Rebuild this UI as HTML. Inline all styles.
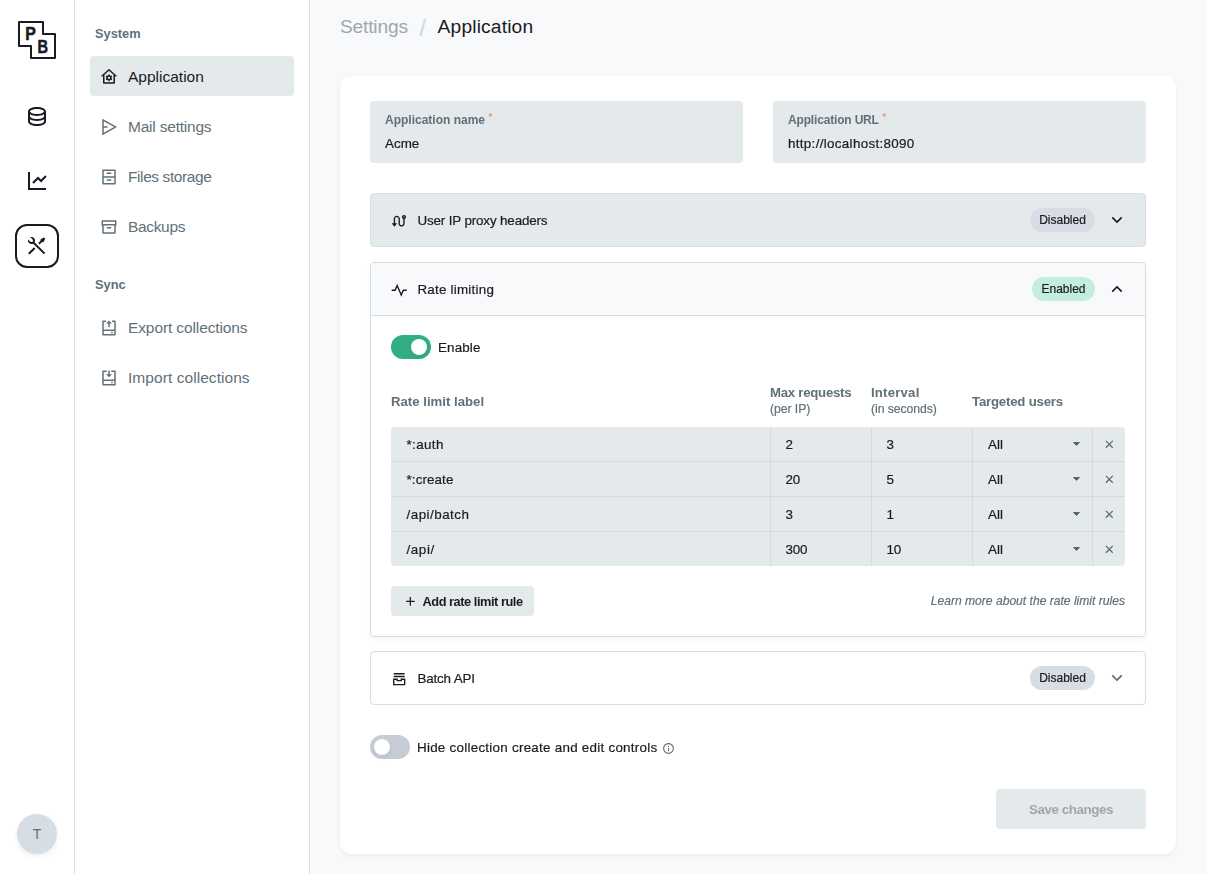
<!DOCTYPE html>
<html lang="en">
<head>
<meta charset="utf-8">
<title>Application settings - PocketBase</title>
<style>
*{box-sizing:border-box;margin:0;padding:0}
html,body{width:1206px;height:874px;overflow:hidden}
body{background:#f8f9fa;color:#1a1a24;font-family:"Liberation Sans",sans-serif;font-size:13.4px;line-height:20px;position:relative}
svg{display:block}
.abs{position:absolute}
/* app sidebar */
.app-sidebar{position:absolute;left:0;top:0;width:75px;height:874px;background:#fff;border-right:1px solid #d9dee7}
.app-sidebar .logo{position:absolute;left:17px;top:20px;width:40px;height:40px}
.app-sidebar .mi{position:absolute;left:15px;width:44px;height:44px;border-radius:12px;border:2px solid transparent;display:flex;align-items:center;justify-content:center}
.app-sidebar .mi.active{border-color:#1a1a24}
.app-sidebar .mi svg{width:24px;height:24px;fill:#1a1a24}
.avatar{position:absolute;left:17px;top:814px;width:40px;height:40px;border-radius:50%;background:#d7dde4;color:#617079;font-size:14px;line-height:40px;text-align:center;box-shadow:0 2px 5px 0 rgba(53,71,104,.09)}
/* page sidebar */
.page-sidebar{position:absolute;left:75px;top:0;width:235px;height:874px;background:#fff;border-right:1px solid #d9dee7}
.sidebar-title{position:absolute;left:20px;font-weight:bold;color:#617079;font-size:12.8px;line-height:20px;margin-top:1px}
.sidebar-item{position:absolute;left:15px;width:204px;height:40px;border-radius:4px;color:#617079;font-size:15.5px;line-height:40px;padding:1px 0 0 38px;white-space:nowrap}
.sidebar-item.active{background:#e4e9ec;color:#1a1a24}
.sidebar-item svg{position:absolute;left:9.8px;top:11.7px;width:18px;height:18px;fill:currentColor}
/* page */
.breadcrumbs span{position:absolute;top:12px;font-size:19.2px;line-height:30px;white-space:nowrap;color:#1a1a24}
.breadcrumbs .muted{left:340px;color:#a0a6ac;letter-spacing:-0.19px}
.breadcrumbs .sep{left:419.3px;top:13.2px;color:#d0d6dd;font-size:24px}
.breadcrumbs .cur{left:437.6px;letter-spacing:0.16px}
.panel{will-change:transform;-webkit-text-stroke:0.2px;position:absolute;left:340px;top:76px;width:836px;height:778px;background:#fff;border-radius:12px;box-shadow:0 2px 5px 0 rgba(53,71,104,.06)}
.field{position:absolute;top:25px;width:373px;height:61.5px;background:#e4e9ec;border-radius:4px}
.field label{position:absolute;left:15px;top:8.8px;font-size:12px;line-height:20px;font-weight:bold;color:#617079;white-space:nowrap}
.field label sup{color:#dd8f62;font-size:11.5px;font-weight:normal;position:absolute;left:calc(100% + 3.2px);top:-2.8px;line-height:20px}
.field .val{position:absolute;left:15px;top:33px;font-size:13.4px;line-height:20px;white-space:nowrap}
.accordion{position:absolute;left:30px;width:776px;border:1px solid #d7dde4;border-radius:4px;background:#fff}
.accordion .hdr{position:relative;height:52px;border-radius:3px}
.accordion .hdr .ico{position:absolute;left:19.9px;top:19.1px;width:16.4px;height:16.4px;fill:#1a1a24}
.accordion .hdr .ttl{position:absolute;left:46.4px;top:17px;line-height:20px;font-size:13.4px;white-space:nowrap}
.accordion .hdr .lbl{position:absolute;top:14px;height:24px;line-height:24px;border-radius:12px;font-size:12px;padding:0;width:65px;text-align:center;background:#d8dce5;white-space:nowrap}
.accordion .hdr .lbl.ok{background:#c4eedc;width:63px}
.accordion .hdr .arr{position:absolute;left:736px;top:16px;width:20px;height:20px;fill:#1a1a24}
.toggle{position:absolute;width:40px;height:24px;border-radius:12px;background:#c6cdd7}
.toggle i{position:absolute;left:4px;top:4px;width:16px;height:16px;border-radius:50%;background:#fff;box-shadow:0 2px 5px 0 rgba(53,71,104,.12)}
.toggle.on{background:#32ad84}
.toggle.on i{left:20px}

.tlabel{position:absolute;font-size:13.4px;line-height:20px;white-space:nowrap}
.th{position:absolute;font-size:13.2px;line-height:16px;font-weight:bold;color:#617079;white-space:nowrap}
.th small{font-size:12.2px;font-weight:normal;letter-spacing:-0.05px}
.table{position:absolute;left:20px;top:164px;width:734px;height:139px;background:#e4e9ec;border-radius:4px;overflow:hidden}
.tr{position:absolute;left:0;width:734px;height:35px;border-bottom:1px solid #d5dadf}
.td{position:absolute;top:0;height:34px;line-height:34px;font-size:13.4px;padding:1px 0 0 15px;border-left:1px solid #d5dadf;white-space:nowrap}
.c1{left:0;width:379px;border-left:0;padding-left:15.5px}
.c2{left:379px;width:101px;letter-spacing:-0.3px;padding-left:14.6px}
.c3{left:480px;width:101px;letter-spacing:-0.3px;padding-left:14.6px}
.c4{left:581px;width:121px}
.c5{left:701px;width:33px;padding:0}
.c5 svg{position:absolute;left:8.75px;top:10.3px;width:14.6px;height:14.6px;fill:#5b6670}
.caret{position:absolute;left:100px;top:14.75px;width:7px;height:4px}
.btn-add{position:absolute;left:20px;top:323px;width:143px;height:30px;border:0;border-radius:4px;background:#e4e9ec;font-family:inherit;font-weight:bold;font-size:12.8px;color:#1a1a24;text-align:left}
.btn-add svg{position:absolute;left:11.75px;top:8.05px;width:14.7px;height:14.7px;fill:#1a1a24}
.btn-add span{position:absolute;left:31.5px;top:5.8px;line-height:20px;white-space:nowrap;letter-spacing:-0.46px}
.learn{position:absolute;right:20px;top:328px;font-size:12.1px;line-height:20px;font-style:italic;color:#617079;white-space:nowrap}
.info{position:absolute;left:322.4px;top:666px;width:13px;height:13px;fill:#617079}
.btn-save{position:absolute;left:656px;top:713px;width:150px;height:40px;letter-spacing:-0.46px;border:0;border-radius:4px;background:#e4e9ec;font-family:inherit;font-weight:bold;font-size:13.4px;color:#a0a6ac;text-align:center}
.th,.field label,.btn-add,.btn-save{-webkit-text-stroke:0}
.th small{-webkit-text-stroke:0.2px}
</style>
</head>
<body>
<aside class="app-sidebar">
  <svg class="logo" viewBox="0 0 40 40">
    <path d="M2 2H26V14H38V38H14V26H2Z" fill="#fff" stroke="#1a1a24" stroke-width="2" stroke-linejoin="round"/>
    <text transform="translate(8.3,19.8) scale(0.9,1)" font-family="Liberation Sans, sans-serif" font-weight="bold" font-size="17.6" fill="#1a1a24" stroke="#1a1a24" stroke-width="0.5">P</text>
    <text transform="translate(20.4,33) scale(0.83,1)" font-family="Liberation Sans, sans-serif" font-weight="bold" font-size="17.6" fill="#1a1a24" stroke="#1a1a24" stroke-width="0.5">B</text>
  </svg>
  <a class="mi" style="top:94px"><svg viewBox="0 0 24 24"><path d="M5 12.5C5 12.8134 5.46101 13.3584 6.53047 13.8931C7.91405 14.5849 9.87677 15 12 15C14.1232 15 16.0859 14.5849 17.4695 13.8931C18.539 13.3584 19 12.8134 19 12.5V10.3287C17.35 11.3482 14.8273 12 12 12C9.17273 12 6.64996 11.3482 5 10.3287V12.5ZM19 15.3287C17.35 16.3482 14.8273 17 12 17C9.17273 17 6.64996 16.3482 5 15.3287V17.5C5 17.8134 5.46101 18.3584 6.53047 18.8931C7.91405 19.5849 9.87677 20 12 20C14.1232 20 16.0859 19.5849 17.4695 18.8931C18.539 18.3584 19 17.8134 19 17.5V15.3287ZM3 17.5V7.5C3 5.01472 7.02944 3 12 3C16.9706 3 21 5.01472 21 7.5V17.5C21 19.9853 16.9706 22 12 22C7.02944 22 3 19.9853 3 17.5ZM12 10C14.1232 10 16.0859 9.58492 17.4695 8.89313C18.539 8.3584 19 7.81342 19 7.5C19 7.18658 18.539 6.6416 17.4695 6.10687C16.0859 5.41508 14.1232 5 12 5C9.87677 5 7.91405 5.41508 6.53047 6.10687C5.46101 6.6416 5 7.18658 5 7.5C5 7.81342 5.46101 8.3584 6.53047 8.89313C7.91405 9.58492 9.87677 10 12 10Z"/></svg></a>
  <a class="mi" style="top:159px"><svg viewBox="0 0 24 24"><path d="M5 3V19H21V21H3V3H5ZM20.2929 6.29289L21.7071 7.70711L16 13.4142L13 10.415L8.70711 14.7071L7.29289 13.2929L13 7.58579L16 10.585L20.2929 6.29289Z"/></svg></a>
  <a class="mi active" style="top:224px"><svg viewBox="0 0 24 24"><path d="M5.32943 3.27158C6.56252 2.8332 7.9923 3.10749 8.97927 4.09446C10.1002 5.21537 10.3019 6.90741 9.5843 8.23385L20.293 18.9437L18.8788 20.3579L8.16982 9.64875C6.84325 10.3669 5.15069 10.1654 4.02952 9.04421C3.04227 8.05696 2.7681 6.62665 3.20701 5.39332L5.44373 7.63C6.02952 8.21578 6.97927 8.21578 7.56505 7.63C8.15084 7.04421 8.15084 6.09446 7.56505 5.50868L5.32943 3.27158ZM15.6968 5.15512L18.8788 3.38736L20.293 4.80157L18.5252 7.98355L16.7574 8.3371L14.6361 10.4584L13.2219 9.04421L15.3432 6.92289L15.6968 5.15512ZM8.97927 13.2868L10.3935 14.7011L5.09018 20.0044C4.69966 20.3949 4.06649 20.3949 3.67597 20.0044C3.31334 19.6417 3.28744 19.0699 3.59826 18.6774L3.67597 18.5902L8.97927 13.2868Z"/></svg></a>
  <div class="avatar">T</div>
</aside>

<aside class="page-sidebar">
  <div class="sidebar-title" style="top:23px">System</div>
  <a class="sidebar-item active" style="top:56px"><svg viewBox="0 0 24 24"><path d="M19 21H5C4.44772 21 4 20.5523 4 20V11L1 11L11.3273 1.6115C11.7087 1.26475 12.2913 1.26475 12.6727 1.6115L23 11L20 11V20C20 20.5523 19.5523 21 19 21ZM6 19H18V9.15745L12 3.7029L6 9.15745V19ZM8.59111 13.8089C8.53708 13.5582 8.50861 13.2968 8.50861 13.0276C8.50861 12.7584 8.53708 12.497 8.59111 12.2463L7.60051 11.6491L8.59174 9.85722L9.65973 10.4543C10.0295 10.0953 10.4795 9.82335 10.979 9.67066V8.5H12.9615V9.67066C13.461 9.82335 13.911 10.0953 14.2808 10.4543L15.3488 9.85722L16.34 11.6491L15.3494 12.2463C15.4034 12.497 15.4319 12.7584 15.4319 13.0276C15.4319 13.2968 15.4034 13.5582 15.3494 13.8089L16.34 14.4061L15.3488 16.198L14.2808 15.6009C13.911 15.9599 13.461 16.2318 12.9615 16.3845V17.5552H10.979V16.3845C10.4795 16.2318 10.0295 15.9599 9.65973 15.6009L8.59174 16.198L7.60051 14.4061L8.59111 13.8089ZM11.9703 14.5368C12.7914 14.5368 13.4571 13.8611 13.4571 13.0276C13.4571 12.1941 12.7914 11.5184 11.9703 11.5184C11.1491 11.5184 10.4834 12.1941 10.4834 13.0276C10.4834 13.8611 11.1491 14.5368 11.9703 14.5368Z"/></svg><span>Application</span></a>
  <a class="sidebar-item" style="top:106px"><svg viewBox="0 0 24 24"><path d="M3.5 1.34558C3.58425 1.34558 3.66714 1.36687 3.74096 1.40747L22.2034 11.5618C22.4454 11.6949 22.5337 11.9989 22.4006 12.2409C22.3549 12.324 22.2865 12.3924 22.2034 12.4381L3.74096 22.5924C3.499 22.7255 3.19497 22.6372 3.06189 22.3953C3.02129 22.3214 3 22.2386 3 22.1543V1.84558C3 1.56944 3.22386 1.34558 3.5 1.34558ZM5 4.38249V10.9999H10V12.9999H5V19.6174L18.8499 11.9999L5 4.38249Z"/></svg><span style="letter-spacing:-0.21px">Mail settings</span></a>
  <a class="sidebar-item" style="top:156px"><svg viewBox="0 0 24 24"><path d="M3 2.9918C3 2.44405 3.44749 2 3.9985 2H20.0015C20.553 2 21 2.44462 21 2.9918V21.0082C21 21.556 20.5525 22 20.0015 22H3.9985C3.44703 22 3 21.5554 3 21.0082V2.9918ZM19 11V4H5V11H19ZM19 13H5V20H19V13ZM9 6H15V8H9V6ZM9 15H15V17H9V15Z"/></svg><span style="letter-spacing:-0.41px">Files storage</span></a>
  <a class="sidebar-item" style="top:206px"><svg viewBox="0 0 24 24"><path d="M3 10H2V4.00293C2 3.44903 2.45531 3 2.9918 3H21.0082C21.556 3 22 3.43788 22 4.00293V10H21V20.0015C21 20.553 20.5551 21 20.0066 21H3.9934C3.44476 21 3 20.5525 3 20.0015V10ZM19 10H5V19H19V10ZM4 5V8H20V5H4ZM9 12H15V14H9V12Z"/></svg><span style="letter-spacing:-0.34px">Backups</span></a>
  <div class="sidebar-title" style="top:274px">Sync</div>
  <a class="sidebar-item" style="top:307px"><svg viewBox="0 0 24 24"><path d="M8 2V4H5L4.999 14H18.999L19 4H16V2H20C20.5523 2 21 2.44772 21 3V21C21 21.5523 20.5523 22 20 22H4C3.44772 22 3 21.5523 3 21V3C3 2.44772 3.44772 2 4 2H8ZM18.999 16H4.999L5 20H19L18.999 16ZM17 17V19H15V17H17ZM12 2L16 6H13V11H11V6H8L12 2Z"/></svg><span style="letter-spacing:-0.11px">Export collections</span></a>
  <a class="sidebar-item" style="top:357px"><svg viewBox="0 0 24 24"><path d="M9 2V4H5L4.999 14H18.999L19 4H15V2H20C20.5523 2 21 2.44772 21 3V21C21 21.5523 20.5523 22 20 22H4C3.44772 22 3 21.5523 3 21V3C3 2.44772 3.44772 2 4 2H9ZM18.999 16H4.999L5 20H19L18.999 16ZM17 17V19H15V17H17ZM13 2V7H16L12 11L8 7H11V2H13Z"/></svg><span style="letter-spacing:0.06px">Import collections</span></a>
</aside>

<nav class="breadcrumbs"><span class="muted">Settings</span><span class="sep">/</span><span class="cur">Application</span></nav>

<main class="panel">
  <div class="field" style="left:30px"><label>Application name<sup>*</sup></label><div class="val">Acme</div></div>
  <div class="field" style="left:433px"><label style="letter-spacing:-0.17px">Application URL<sup>*</sup></label><div class="val" style="letter-spacing:0.32px">http://localhost:8090</div></div>

  <section class="accordion" style="top:117px;background:#e4e9ec">
    <div class="hdr"><svg class="ico" viewBox="0 0 24 24"><path d="M4 15V8.5C4 6.01472 6.01472 4 8.5 4C10.9853 4 13 6.01472 13 8.5V15.5C13 16.8807 14.1193 18 15.5 18C16.8807 18 18 16.8807 18 15.5V8.82929C16.8348 8.41746 16 7.30622 16 6C16 4.34315 17.3431 3 19 3C20.6569 3 22 4.34315 22 6C22 7.30622 21.1652 8.41746 20 8.82929V15.5C20 17.9853 17.9853 20 15.5 20C13.0147 20 11 17.9853 11 15.5V8.5C11 7.11929 9.88071 6 8.5 6C7.11929 6 6 7.11929 6 8.5V15H9L5 20L1 15H4ZM19 7C19.5523 7 20 6.55228 20 6C20 5.44772 19.5523 5 19 5C18.4477 5 18 5.44772 18 6C18 6.55228 18.4477 7 19 7Z"/></svg><span class="ttl" style="letter-spacing:-0.14px">User IP proxy headers</span><span class="lbl" style="left:659px">Disabled</span><svg class="arr" viewBox="0 0 24 24"><path d="M11.9999 13.1714L16.9497 8.22168L18.3639 9.63589L11.9999 15.9999L5.63599 9.63589L7.0502 8.22168L11.9999 13.1714Z"/></svg></div>
  </section>

  <section class="accordion" style="top:186px;height:375px;box-shadow:0 2px 5px 0 rgba(53,71,104,.06)">
    <div class="hdr" style="background:#f8f9fa;border-bottom:1px solid #d7dde4;height:53px;border-radius:3px 3px 0 0"><svg class="ico" viewBox="0 0 24 24"><path d="M9 7.53861L15 21.5386L18.6594 13H23V11H17.3406L15 16.4614L9 2.46143L5.3406 11H1V13H6.6594L9 7.53861Z"/></svg><span class="ttl" style="letter-spacing:0.23px">Rate limiting</span><span class="lbl ok" style="left:661px">Enabled</span><svg class="arr" viewBox="0 0 24 24"><path d="M11.9999 10.8284L7.0502 15.7782L5.63599 14.364L11.9999 8L18.3639 14.364L16.9497 15.7782L11.9999 10.8284Z"/></svg></div>
    <div class="toggle on" style="left:20px;top:72px"><i></i></div>
    <span class="tlabel" style="left:67px;top:74.8px;letter-spacing:0.15px">Enable</span>
    <div class="th" style="left:20px;top:131px">Rate limit label</div>
    <div class="th" style="left:399px;top:121.7px;letter-spacing:-0.25px">Max requests<br><small>(per IP)</small></div>
    <div class="th" style="left:500px;top:121.7px;letter-spacing:0.2px">Interval<br><small>(in seconds)</small></div>
    <div class="th" style="left:601px;top:131px;letter-spacing:-0.19px">Targeted users</div>
    <div class="table">
      <div class="tr" style="top:0px"><div class="td c1" style="letter-spacing:0.37px">*:auth</div><div class="td c2">2</div><div class="td c3">3</div><div class="td c4">All<svg class="caret" viewBox="0 0 7 4"><path d="M0.5 0.5H6.5L3.5 3.4Z" fill="#56616c" stroke="#56616c" stroke-width="0.9" stroke-linejoin="round"/></svg></div><div class="td c5"><svg viewBox="0 0 24 24"><path d="M11.9997 10.5865L16.9495 5.63672L18.3637 7.05093L13.4139 12.0007L18.3637 16.9504L16.9495 18.3646L11.9997 13.4149L7.04996 18.3646L5.63574 16.9504L10.5855 12.0007L5.63574 7.05093L7.04996 5.63672L11.9997 10.5865Z"/></svg></div></div>
      <div class="tr" style="top:35px"><div class="td c1" style="letter-spacing:0.1px">*:create</div><div class="td c2">20</div><div class="td c3">5</div><div class="td c4">All<svg class="caret" viewBox="0 0 7 4"><path d="M0.5 0.5H6.5L3.5 3.4Z" fill="#56616c" stroke="#56616c" stroke-width="0.9" stroke-linejoin="round"/></svg></div><div class="td c5"><svg viewBox="0 0 24 24"><path d="M11.9997 10.5865L16.9495 5.63672L18.3637 7.05093L13.4139 12.0007L18.3637 16.9504L16.9495 18.3646L11.9997 13.4149L7.04996 18.3646L5.63574 16.9504L10.5855 12.0007L5.63574 7.05093L7.04996 5.63672L11.9997 10.5865Z"/></svg></div></div>
      <div class="tr" style="top:70px"><div class="td c1" style="letter-spacing:0.48px">/api/batch</div><div class="td c2">3</div><div class="td c3">1</div><div class="td c4">All<svg class="caret" viewBox="0 0 7 4"><path d="M0.5 0.5H6.5L3.5 3.4Z" fill="#56616c" stroke="#56616c" stroke-width="0.9" stroke-linejoin="round"/></svg></div><div class="td c5"><svg viewBox="0 0 24 24"><path d="M11.9997 10.5865L16.9495 5.63672L18.3637 7.05093L13.4139 12.0007L18.3637 16.9504L16.9495 18.3646L11.9997 13.4149L7.04996 18.3646L5.63574 16.9504L10.5855 12.0007L5.63574 7.05093L7.04996 5.63672L11.9997 10.5865Z"/></svg></div></div>
      <div class="tr" style="top:105px"><div class="td c1" style="letter-spacing:0.6px">/api/</div><div class="td c2">300</div><div class="td c3">10</div><div class="td c4">All<svg class="caret" viewBox="0 0 7 4"><path d="M0.5 0.5H6.5L3.5 3.4Z" fill="#56616c" stroke="#56616c" stroke-width="0.9" stroke-linejoin="round"/></svg></div><div class="td c5"><svg viewBox="0 0 24 24"><path d="M11.9997 10.5865L16.9495 5.63672L18.3637 7.05093L13.4139 12.0007L18.3637 16.9504L16.9495 18.3646L11.9997 13.4149L7.04996 18.3646L5.63574 16.9504L10.5855 12.0007L5.63574 7.05093L7.04996 5.63672L11.9997 10.5865Z"/></svg></div></div>
    </div>
    <button class="btn-add"><svg viewBox="0 0 24 24"><path d="M11 11V5H13V11H19V13H13V19H11V13H5V11H11Z"/></svg><span>Add rate limit rule</span></button>
    <a class="learn">Learn more about the rate limit rules</a>
  </section>

  <section class="accordion" style="top:575px">
    <div class="hdr"><svg class="ico" viewBox="0 0 24 24"><path d="M4 5H20V3H4V5ZM20 9H4V7H20V9ZM3 11H10V13H14V11H21V20C21 20.5523 20.5523 21 20 21H4C3.44772 21 3 20.5523 3 20V11ZM16 13V15H8V13H5V19H19V13H16Z"/></svg><span class="ttl" style="letter-spacing:-0.15px">Batch API</span><span class="lbl" style="left:659px">Disabled</span><svg class="arr" style="fill:#5b6670" viewBox="0 0 24 24"><path d="M11.9999 13.1714L16.9497 8.22168L18.3639 9.63589L11.9999 15.9999L5.63599 9.63589L7.0502 8.22168L11.9999 13.1714Z"/></svg></div>
  </section>

  <div class="toggle" style="left:30px;top:659px"><i></i></div>
  <span class="tlabel" style="left:77px;top:662px;letter-spacing:0.26px">Hide collection create and edit controls</span>
  <svg class="info" viewBox="0 0 24 24"><path d="M12 22C6.47715 22 2 17.5228 2 12C2 6.47715 6.47715 2 12 2C17.5228 2 22 6.47715 22 12C22 17.5228 17.5228 22 12 22ZM12 20C16.4183 20 20 16.4183 20 12C20 7.58172 16.4183 4 12 4C7.58172 4 4 7.58172 4 12C4 16.4183 7.58172 20 12 20ZM11 7H13V9H11V7ZM11 11H13V17H11V11Z"/></svg>
  <button class="btn-save">Save changes</button>

</main>
</body>
</html>
